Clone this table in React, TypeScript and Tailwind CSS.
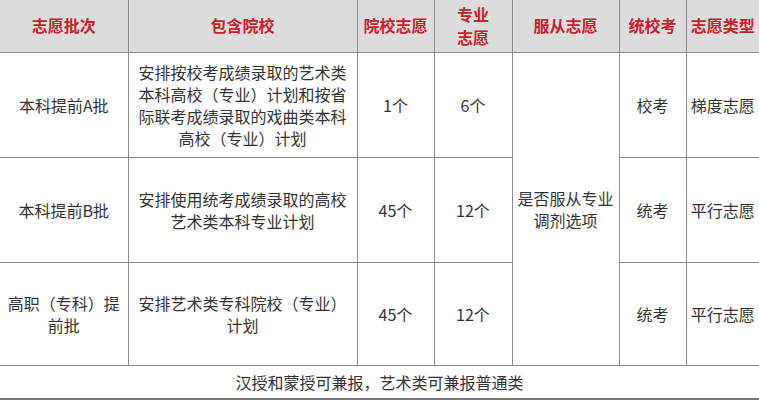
const rows = [
  {
    batch: ["本科提前A批"],
    schools: ["安排按校考成绩录取的艺术类", "本科高校（专业）计划和按省", "际联考成绩录取的戏曲类本科", "高校（专业）计划"],
    college: "1个",
    major: "6个",
    exam: "校考",
    kind: "梯度志愿",
    h: "h-[105px]",
  },
  {
    batch: ["本科提前B批"],
    schools: ["安排使用统考成绩录取的高校", "艺术类本科专业计划"],
    college: "45个",
    major: "12个",
    exam: "统考",
    kind: "平行志愿",
    h: "h-[105px]",
  },
  {
    batch: ["高职（专科）提", "前批"],
    schools: ["安排艺术类专科院校（专业）", "计划"],
    college: "45个",
    major: "12个",
    exam: "统考",
    kind: "平行志愿",
    h: "h-[103px]",
  },
]

const lines = (items: string[]) =>
  items.map((t, i) => (
    <span key={i} className="block">
      {t}
    </span>
  ))

export default function App() {
  const th = "border-b border-l first:border-l-0 border-[#8a8a8a] px-0.5 text-center align-middle font-bold text-[#c8232c] text-[16px] leading-[23px]"
  const td = "border-b border-l first:border-l-0 border-[#8a8a8a] px-1 text-center align-middle text-[#333] text-[16px] leading-[22px]"

  return (
    <div className="w-[759px] h-[400px] bg-white overflow-hidden font-['Noto_Sans_CJK_SC','Noto_Sans',sans-serif]">
      <table className="w-[759px] table-fixed border-collapse">
        <colgroup>
          <col className="w-[128px]" />
          <col className="w-[229px]" />
          <col className="w-[77px]" />
          <col className="w-[78px]" />
          <col className="w-[107px]" />
          <col className="w-[67px]" />
          <col className="w-[73px]" />
        </colgroup>
        <thead>
          <tr className="h-[52px] bg-[#dcdcdc]">
            <th className={th}>志愿批次</th>
            <th className={th}>包含院校</th>
            <th className={th}>院校志愿</th>
            <th className={th}>
              <span className="block">专业</span>
              <span className="block">志愿</span>
            </th>
            <th className={th}>服从志愿</th>
            <th className={th}>统校考</th>
            <th className={th}>志愿类型</th>
          </tr>
        </thead>
        <tbody>
          {rows.map((r, i) => (
            <tr key={i} className={r.h}>
              <td className={td + " border-l-0"}>{lines(r.batch)}</td>
              <td className={td}>{lines(r.schools)}</td>
              <td className={td}>{r.college}</td>
              <td className={td}>{r.major}</td>
              {i === 0 && (
                <td rowSpan={3} className={td}>
                  <span className="block">是否服从专业</span>
                  <span className="block">调剂选项</span>
                </td>
              )}
              <td className={td}>{r.exam}</td>
              <td className={td}>{r.kind}</td>
            </tr>
          ))}
          <tr className="h-[34px]">
            <td colSpan={7} className="border-b-2 border-[#7a7a7a] text-center align-middle text-[#333] text-[16px] leading-[22px]">
              汉授和蒙授可兼报，艺术类可兼报普通类
            </td>
          </tr>
        </tbody>
      </table>
    </div>
  )
}
